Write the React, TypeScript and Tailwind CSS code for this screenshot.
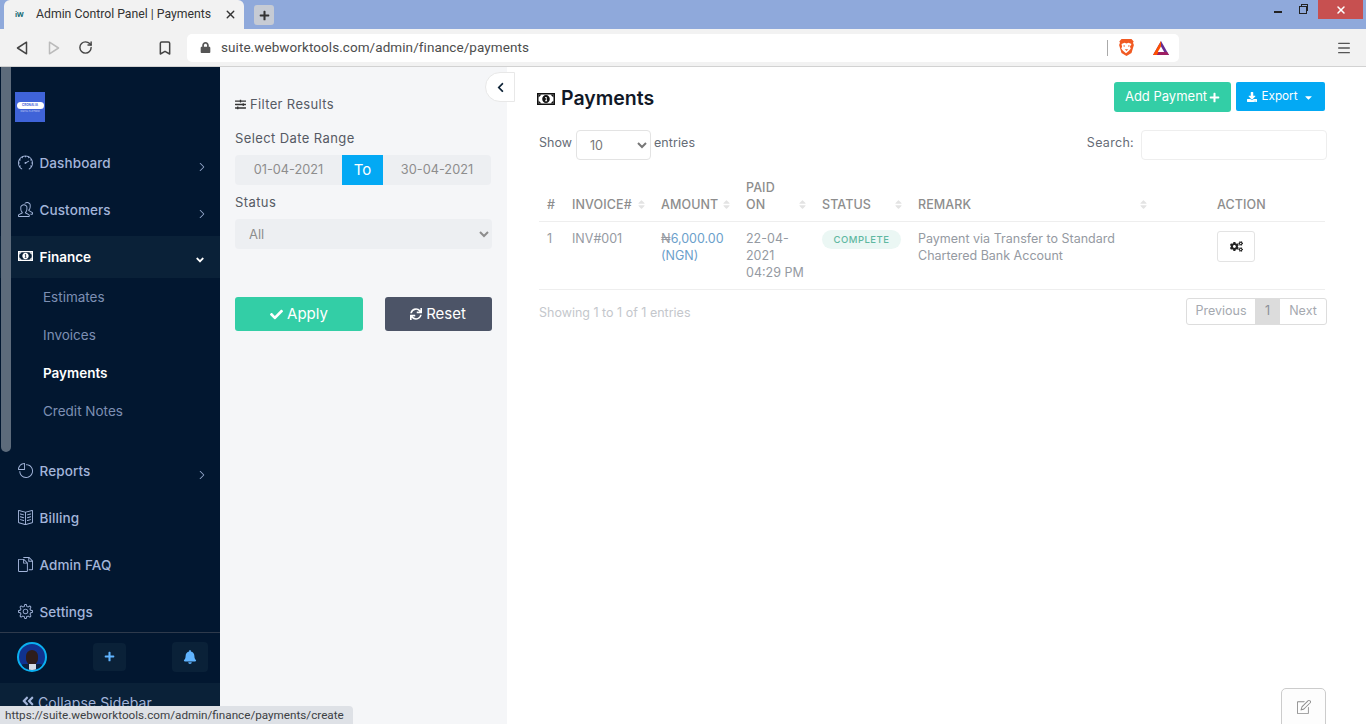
import {
  FaAngleDoubleLeft,
  FaAngleDown,
  FaBell,
  FaCaretDown,
  FaCheck,
  FaChevronLeft,
  FaCogs,
  FaDownload,
  FaLock,
  FaPlus,
  FaSlidersH,
  FaSort,
  FaSync,
} from "react-icons/fa";
import {
  SlArrowRight,
  SlBookOpen,
  SlDocs,
  SlNote,
  SlPeople,
  SlPieChart,
  SlSettings,
  SlSpeedometer,
} from "react-icons/sl";
import { Bookmark, Menu, RotateCw, X } from "lucide-react";

// banknote: frame, centre oval, and a "1" stroke cut out of the oval
const MoneyIcon = ({ className }: { className?: string }) => (
  <svg viewBox="0 0 18 12" className={className} fill="currentColor" fillRule="evenodd">
    <path d="M0 0h18v12H0zM1.500 1.500v9h15v-9z" />
    <path d="M1.500 1.500h3l-3 3zM16.500 1.500h-3l3 3zM1.500 10.500h3l-3-3zM16.500 10.500h-3l3-3z" />
    <path d="M9 2c2.200 0 3.800 1.800 3.800 4S11.200 10 9 10 5.200 8.200 5.200 6 6.800 2 9 2zM8.200 4v1h.6v2.200h-.7v1h2v-1h-.4V4z" />
  </svg>
);

const NavItem = ({ icon, label, arrow }: { icon: React.ReactNode; label: string; arrow?: boolean }) => (
  <div className="h-[47px] flex items-center pl-[18px] pr-[14px] text-[#a3b5da]">
    <span className="w-[15px] flex justify-center text-[15px] -translate-y-[1px]">{icon}</span>
    <span className="ml-[6.500px] text-[13.5px] font-medium tracking-[0.1px]">{label}</span>
    {arrow && <SlArrowRight className="ml-auto mt-[6px] text-[8px] stroke-[30px]" />}
  </div>
);

const SubItem = ({ label, active }: { label: string; active?: boolean }) => (
  <div className={`h-[38px] flex items-center pl-[43px] pt-[1px] text-[13.5px] ${active ? "text-white font-semibold" : "text-[#7d8fb3]"}`}>
    {label}
  </div>
);

const Th = ({ label, sort = true, w }: { label: React.ReactNode; sort?: boolean; w: string }) => (
  <th className={`${w} relative pl-2 pb-[8px] align-bottom text-left text-[12.5px] leading-[17px] font-medium text-[#8d8d8d] tracking-[0.1px]`}>
    {label}
    {sort && <FaSort className="absolute right-[6px] bottom-[11px] text-[11px] text-[#e3e3e3]" />}
  </th>
);

const BrowserChrome = () => (
  <div className="shrink-0 font-['Roboto',sans-serif]">
    {/* Tabs */}
    <div className="h-[29px] bg-[#8fa9db] flex items-end pl-1 relative">
      <div className="w-[240px] h-[29px] bg-[#f2f2f2] rounded-t-[6px] flex items-center pl-[11px] text-[12.25px] text-[#333]">
        <span className="w-[20px] text-[8px] font-bold text-[#1f6f78] tracking-tighter">iW</span>
        <span className="ml-[1px]">Admin Control Panel | Payments</span>
        <X size={13} strokeWidth={2.5} className="ml-auto mr-[7px] text-[#333]" />
      </div>
      <div className="ml-[10px] mb-[4px] w-[20px] h-[20px] bg-[#c6cbd4] rounded-[3px] flex items-center justify-center">
        <FaPlus className="text-[11px] text-[#333]" />
      </div>
      <div className="ml-auto h-[19px] self-start flex items-center">
        <div className="w-[8px] h-[2px] bg-[#222] mr-[17px] mt-[5px]" />
        <div className="relative w-[10px] h-[10px] mr-[9px]">
          <div className="absolute left-[2px] top-[-1px] w-[7px] h-[7px] border border-[#222]" />
          <div className="absolute left-0 top-[1px] w-[8px] h-[8px] border border-[#222] bg-[#8fa9db]" />
        </div>
        <div className="w-[45px] h-[19px] bg-[#c75050] flex items-center justify-center mr-[3px]">
          <X size={12} strokeWidth={3} className="text-white" />
        </div>
      </div>
    </div>
    {/* Toolbar */}
    <div className="h-[38px] bg-[#f2f2f2] border-b border-[#d2d2d2] flex items-center text-[#555] relative">
      <svg width="12" height="14" viewBox="0 0 12 14" className="ml-[16px]">
        <path d="M10.500 1.200v11.600L1.500 7z" fill="none" stroke="#444" strokeWidth="1.500" strokeLinejoin="round" />
      </svg>
      <svg width="12" height="14" viewBox="0 0 12 14" className="ml-[20px]">
        <path d="M1.500 1.200v11.600l9-5.800z" fill="none" stroke="#bbb" strokeWidth="1.500" strokeLinejoin="round" />
      </svg>
      <RotateCw size={15} strokeWidth={2.25} className="ml-[18px] text-[#444]" />
      <Bookmark size={16} strokeWidth={2.25} className="ml-[64px] text-[#444]" />
      <div className="ml-[14px] w-[992px] h-[28px] bg-white rounded-[5px] flex items-center pl-[13px]">
        <FaLock className="text-[11px] text-[#555]" />
        <span className="ml-[10px] text-[13.5px] text-[#4d4d4d] tracking-[0.07px]">suite.webworktools.com/admin/finance/payments</span>
        <div className="ml-auto w-px h-[16px] bg-[#aaa]" />
        <svg width="17" height="19" viewBox="0 0 17 19" className="ml-[10px]">
          <path d="M3.500 1h10l2.200 2.500-.7 1.200.9 2.300-2.400 8L8.500 18l-5-3-2.400-8L2 4.700l-.7-1.200z" fill="#f15a22" />
          <path d="M3.500 6l3-1.200L8.500 5.500l2-.7 3 1.200-1.600 2.800.9 1.600-1.800 2.400-3 2.400-3-2.400L3.200 10.400l.9-1.600z" fill="#fff" />
          <path d="M6.700 11.200h3.600L8.500 13z" fill="#f15a22" />
          <path d="M5.200 7.600h1.800v.9H5.600zM10 7.600h1.800l-.4.9H10z" fill="#f15a22" />
        </svg>
        <svg width="18" height="16" viewBox="0 0 18 16" className="ml-[17px] mr-[9px]">
          <path d="M9 1 1 15h16z" fill="#662d91" />
          <path d="M9 1 1 15h4L9 8z" fill="#ff5000" />
          <path d="M5 15h12l-2-3H7z" fill="#9e1f63" />
          <path d="M9 6.500 5.800 12h6.400z" fill="#fff" />
        </svg>
      </div>
      <Menu size={16} strokeWidth={2} className="ml-auto mr-[14px] text-[#555]" />
    </div>
  </div>
);

const Sidebar = () => (
  <aside className="w-[220px] shrink-0 bg-[#021730] flex flex-col relative">
    <div className="absolute left-px top-0 w-[10px] h-[385px] bg-[#5d6b7b] rounded-b-[5px] z-10" />
    <div className="h-[565px] overflow-hidden">
      <div className="h-[73px] pt-[25px] pl-[15px]">
        <div className="w-[30px] h-[30px] bg-[#3f63d8] flex flex-col items-center justify-center">
          <div className="w-[27px] h-[7px] bg-white rounded-full text-[3px] leading-[7px] text-center font-bold text-[#3f63d8]">CRONALIA</div>
          <div className="text-[2px] leading-[4px] text-[#cdd7f5]">DIGITAL PLATFORM</div>
        </div>
      </div>
      <NavItem icon={<SlSpeedometer />} label="Dashboard" arrow />
      <NavItem icon={<SlPeople />} label="Customers" arrow />
      <div className="mt-[2px] h-[42px] bg-[#0a2138] flex items-center pl-[18px] pr-[14px] text-white">
        <MoneyIcon className="w-[15px] h-[10px] -translate-y-[1px]" />
        <span className="ml-[6.500px] text-[13.5px] font-semibold">Finance</span>
        <FaAngleDown className="ml-auto mt-[6px] text-[12px]" />
      </div>
      <SubItem label="Estimates" />
      <SubItem label="Invoices" />
      <SubItem label="Payments" active />
      <SubItem label="Credit Notes" />
      <div className="h-[18px]" />
      <NavItem icon={<SlPieChart />} label="Reports" arrow />
      <NavItem icon={<SlBookOpen />} label="Billing" />
      <NavItem icon={<SlDocs />} label="Admin FAQ" />
      <NavItem icon={<SlSettings />} label="Settings" />
    </div>
    <div className="h-[51px] border-t border-[#2e3a4c] flex items-center pl-[17px] pb-[3px]">
      <div className="w-[30px] h-[30px] rounded-full border-2 border-[#0bb0f0] bg-[#10328f] flex flex-col items-center justify-end overflow-hidden shrink-0">
        <div className="w-[12px] h-[15px] shrink-0 rounded-full bg-[#2e1d1c] mb-[-1px]" />
        <div className="w-[22px] h-[6px] shrink-0 rounded-t-[3px] bg-[#0d2240] flex justify-center">
          <div className="w-[7px] h-[6px] bg-[#d5dbe6]" />
        </div>
      </div>
      <div className="ml-[46px] w-[33px] h-[28px] rounded-[4px] bg-[#0a2138] flex items-center justify-center">
        <FaPlus className="text-[11px] text-[#60b4ff]" />
      </div>
      <div className="ml-[46px] w-[36px] h-[30px] rounded-[4px] bg-[#0a2138] flex items-center justify-center">
        <FaBell className="text-[14px] text-[#60b4ff]" />
      </div>
    </div>
    <div className="flex-1 bg-[#0a2138] flex items-start pt-[9px] pl-[21px] text-[#a3b5da] text-[14px] tracking-[0.1px]">
      <FaAngleDoubleLeft className="text-[14px] mt-[2px]" />
      <span className="ml-[3px]">Collapse Sidebar</span>
    </div>
  </aside>
);

const FilterPanel = () => (
  <section className="w-[287px] shrink-0 bg-[#f5f6f8] pl-[15px] pr-[15px] text-[#555a64]">
    <div className="mt-[29px] flex items-center h-[17px] text-[13px] tracking-[0.35px]">
      <FaSlidersH className="text-[11px] text-[#333]" />
      <span className="ml-[4px]">Filter Results</span>
    </div>
    <div className="mt-[17px] h-[17px] text-[13px] leading-[17px] tracking-[0.4px]">Select Date Range</div>
    <div className="mt-[8px] w-[256px] h-[30px] flex text-[12.75px] rounded-[4px] overflow-hidden bg-[#edeff2] text-[#8d8d8d]">
      <div className="w-[107px] flex items-center justify-center">01-04-2021</div>
      <div className="w-[41px] flex items-center justify-center bg-[#03a9f4] text-white text-[15px]">To</div>
      <div className="flex-1 flex items-center justify-center">30-04-2021</div>
    </div>
    <div className="mt-[9px] h-[17px] text-[13px] leading-[17px] tracking-[0.4px]">Status</div>
    <select className="mt-[8px] w-[257px] h-[30px] pl-[10px] rounded-[4px] bg-[#edeff2] text-[13px] text-[#8d8d8d] outline-none">
      <option>All</option>
    </select>
    <div className="mt-[48px] w-[257px] flex justify-between">
      <button className="w-[128px] h-[34px] rounded-[3px] bg-[#33cea6] text-white text-[15px] flex items-center justify-center gap-[4px]">
        <FaCheck className="text-[13px]" /> Apply
      </button>
      <button className="w-[107px] h-[34px] rounded-[3px] bg-[#4c5467] text-white text-[15px] flex items-center justify-center gap-[4px] pr-[1px]">
        <FaSync className="text-[12px]" /> Reset
      </button>
    </div>
  </section>
);

const PaymentsTable = () => (
  <table className="w-[786px] ml-[2px] table-fixed border-collapse">
    <thead>
      <tr className="h-[61px] border-b border-[#eeeeee]">
        <Th w="w-[25px]" label="#" sort={false} />
        <Th w="w-[89px]" label="INVOICE#" />
        <Th w="w-[85px]" label="AMOUNT" />
        <Th w="w-[76px]" label={<>PAID<br />ON</>} />
        <Th w="w-[96px]" label="STATUS" />
        <Th w="w-[245px]" label="REMARK" />
        <Th w="w-[54px]" label="" sort={false} />
        <Th w="w-[116px]" label="ACTION" sort={false} />
      </tr>
    </thead>
    <tbody>
      <tr className="h-[68px] border-b border-[#eeeeee] align-top text-[12.5px] leading-[17px] text-[#959aa2]">
        <td className="pl-2 pt-[8px]">1</td>
        <td className="pl-2 pt-[8px]">INV#001</td>
        <td className="pl-2 pt-[8px] text-[#6ba0cb]"><span className="text-[#959aa2]">₦</span>6,000.00<br />(NGN)</td>
        <td className="pl-2 pt-[8px]">22-04-<br />2021<br />04:29 PM</td>
        <td className="pl-2 pt-[8px]">
          <span className="inline-flex items-center justify-center w-[79px] h-[19px] rounded-full bg-[#ebf7f4] text-[#5fb8a1] text-[9.5px] tracking-[0.5px] font-medium">COMPLETE</span>
        </td>
        <td colSpan={2} className="pl-2 pt-[8px]">Payment via Transfer to Standard<br />Chartered Bank Account</td>
        <td className="pl-2 pt-[9px]">
          <button className="w-[38px] h-[31px] border border-[#e3e3e3] rounded-[3px] flex items-center justify-center">
            <FaCogs className="text-[13px] text-[#222]" />
          </button>
        </td>
      </tr>
    </tbody>
  </table>
);

const MainContent = () => (
  <main className="flex-1 relative bg-white pl-[30px] pr-[41px] text-[#6b7280]">
    <div className="flex items-start pt-[15px]">
      <div className="flex items-center h-[31px] mt-[1px] text-[#111827]">
        <MoneyIcon className="w-[18px] h-[12px] text-[#111]" />
        <h1 className="ml-[6px] text-[19.5px] font-semibold">Payments</h1>
      </div>
      <button className="ml-auto w-[117px] h-[30px] rounded-[3px] bg-[#33cea6] text-white text-[13px] flex items-center justify-center gap-[2px]">
        Add Payment <FaPlus className="text-[11px]" />
      </button>
      <button className="ml-[5px] w-[89px] h-[29px] rounded-[2px] bg-[#03a9f4] text-white text-[11.75px] flex items-center justify-center gap-[4px] pt-[1px]">
        <FaDownload className="text-[10px]" /> Export <FaCaretDown className="ml-[1px] text-[11px]" />
      </button>
    </div>
    <div className="mt-[16px] h-[30px] flex items-center text-[12.5px] pl-[2px] text-[#666c76]">
      <span className="pb-[3px]">Show</span>
      <select className="ml-[4px] mr-[3px] w-[75px] h-[30px] pl-[9px] border border-[#e3e3e3] rounded-[4px] text-[12.5px] text-[#777] outline-none bg-white">
        <option>10</option>
      </select>
      <span className="pb-[3px] tracking-[0.1px]">entries</span>
      <span className="ml-auto mr-[7px] pb-[3px] tracking-[0.3px]">Search:</span>
      <input className="w-[186px] h-[30px] border border-[#eeeeee] rounded-[4px] mr-[-2px] outline-none" />
    </div>
    <PaymentsTable />
    <div className="mt-[8px] ml-[2px] flex items-start justify-between mr-[-2px]">
      <div className="mt-[6px] text-[12.5px] leading-[17px] text-[#c4c7cc]">Showing 1 to 1 of 1 entries</div>
      <div className="h-[27px] flex text-[12.5px] text-[#a5a9b0] border border-[#dddddd] rounded-[3px] overflow-hidden pt-px">
        <div className="w-[68px] flex items-center justify-center">Previous</div>
        <div className="w-[25px] flex items-center justify-center bg-[#dcdcdc] text-[#8a8f98] -mt-px">1</div>
        <div className="w-[46px] flex items-center justify-center">Next</div>
      </div>
    </div>
    {/* Toggle filter panel */}
    <button className="absolute left-[-22px] top-[5px] w-[30px] h-[30px] bg-white rounded-l-full border border-[#e8e8e8] flex items-center justify-center">
      <FaChevronLeft className="text-[11px] text-[#0f2438]" />
    </button>
    {/* Notes */}
    <button className="absolute right-[40px] top-[621px] w-[45px] h-[46px] bg-[#fdfdfd] border border-[#cccccc] rounded-[5px] flex items-center justify-center pb-[8px]">
      <SlNote className="text-[14px] text-[#8a8a8a]" />
    </button>
  </main>
);

const App = () => {
  return (
    <div className="w-[1366px] h-[724px] overflow-hidden flex flex-col relative font-['Inter',sans-serif]">
      <BrowserChrome />
      <div className="flex-1 flex min-h-0">
        <Sidebar />
        <FilterPanel />
        <MainContent />
      </div>
      {/* Status bubble */}
      <div className="absolute left-0 bottom-0 w-[353px] h-[18px] bg-[#dee1e6] rounded-tr-[4px] pl-[5px] text-[11.7px] leading-[19px] text-[#3c4043] font-['Roboto',sans-serif] whitespace-nowrap">
        https://suite.webworktools.com/admin/finance/payments/create
      </div>
    </div>
  );
};

export default App;
